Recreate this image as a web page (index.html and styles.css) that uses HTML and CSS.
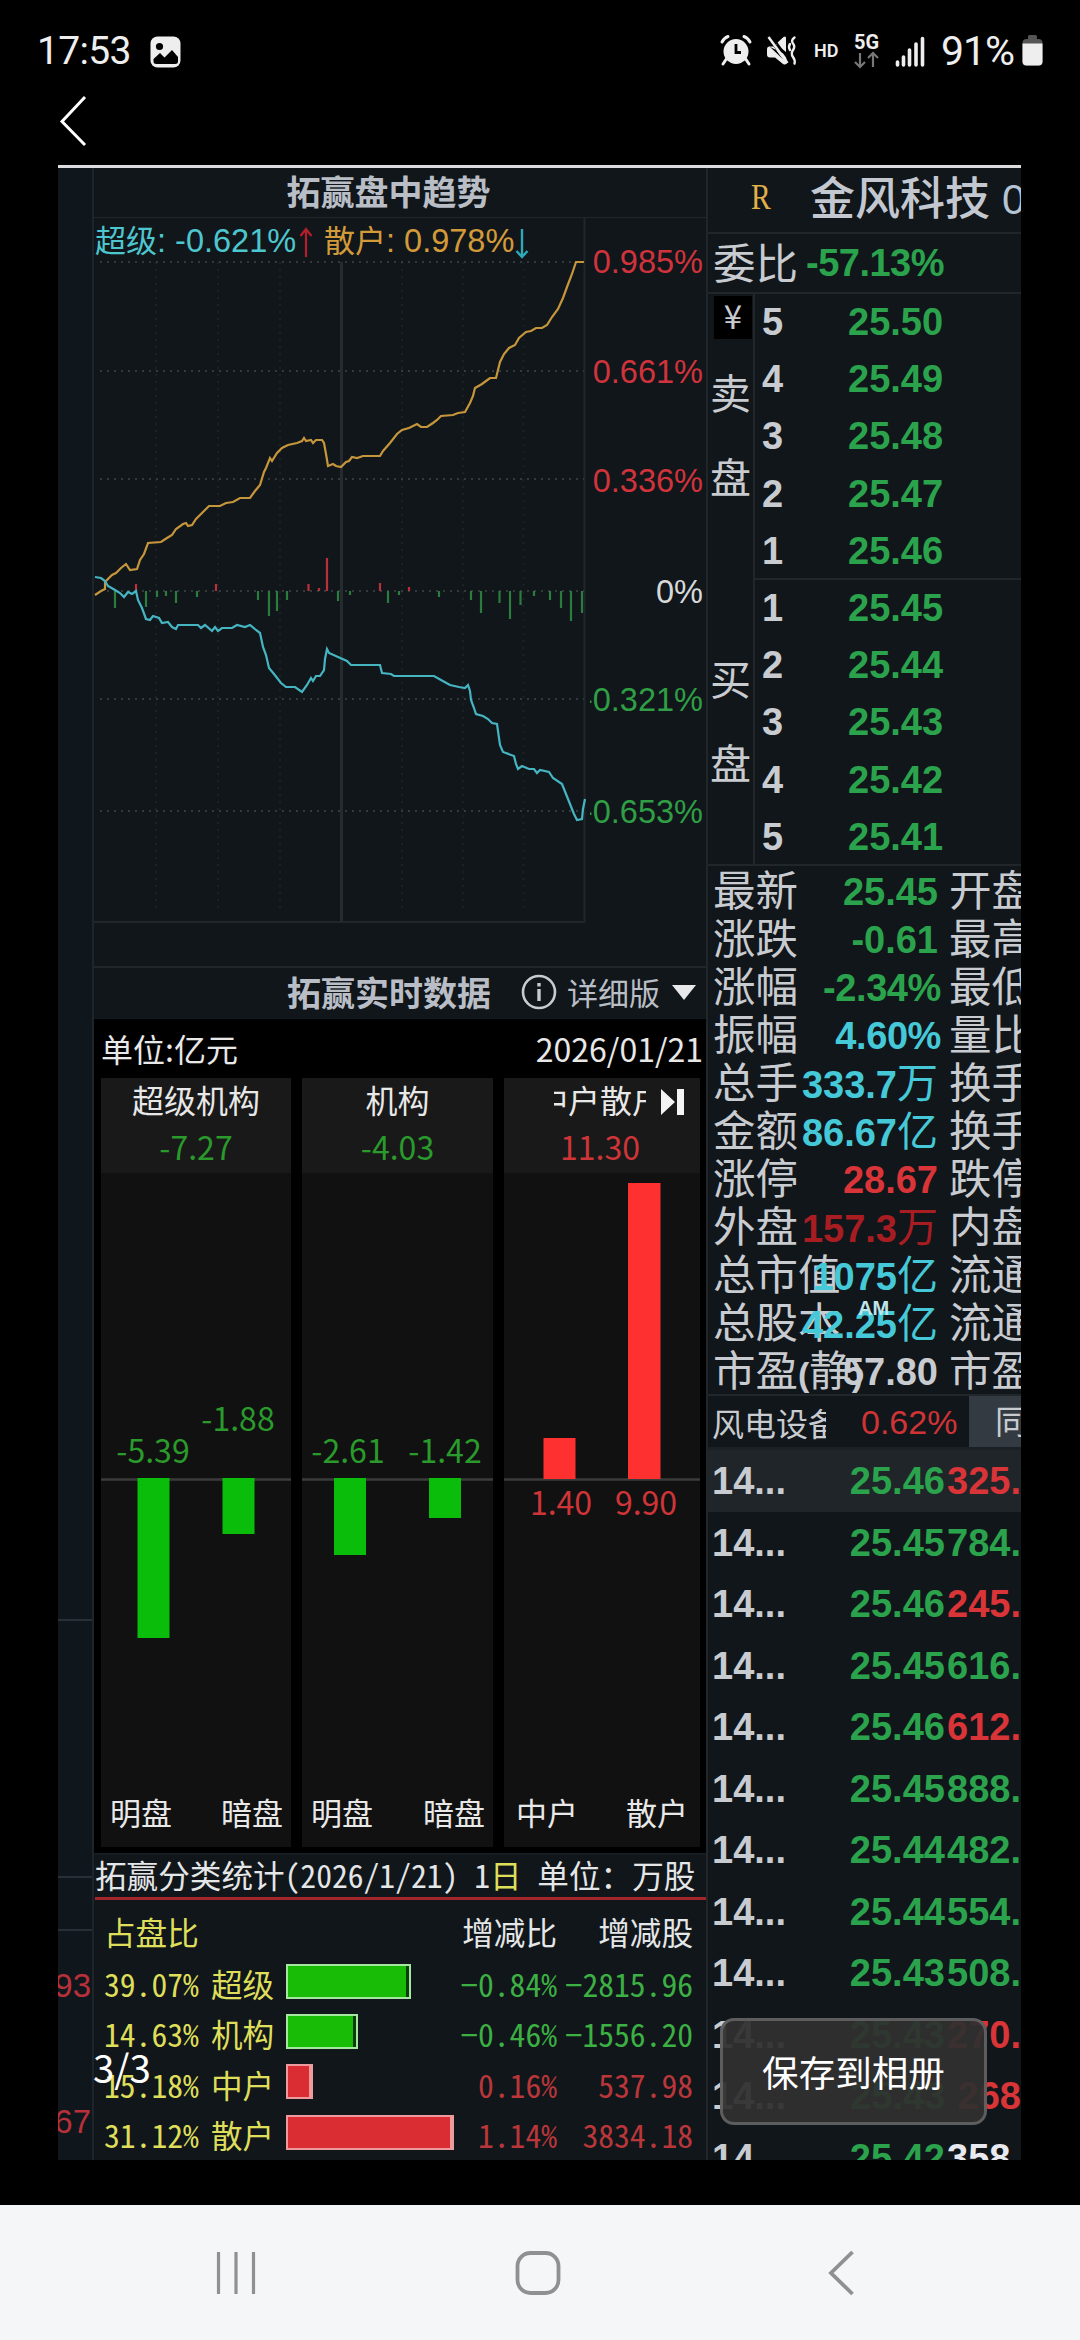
FILE: index.html
```html
<!DOCTYPE html>
<html lang="zh-CN">
<head>
<meta charset="utf-8">
<title>金风科技</title>
<link rel="stylesheet" href="styles.css">
</head>
<body>
<header class="status">
  <span class="clock">17:53</span>
  <svg class="ic-image" width="31" height="32" viewBox="0 0 31 32"><rect x="0.5" y="0.5" width="30" height="31" rx="7" fill="#eee"/><circle cx="9.5" cy="10.5" r="3.6" fill="#000"/><path d="M3.5 25.500V23l6.500-6 4.500 4.500L22 14l6 7v4.500q0 2.500-3 2.500H6.500q-3 0-3-2.500z" fill="#000"/></svg>
  <svg class="ic-sys" width="210" height="40" viewBox="718 32 210 40">
    <g fill="#eee">
      <circle cx="736" cy="52.500" r="12.500"/>
      <path d="M727 59l-4 6M745 59l4 6M722 43q2-4 6-5.500M750 43q-2-4-6-5.500" stroke="#eee" stroke-width="3" fill="none" stroke-linecap="round"/>
      <path d="M736 45v8.500h5" stroke="#000" stroke-width="2.800" fill="none"/>
      <path d="M769 47.500h4.500L786.500 65V56M776 45l7.500-7q2.500-1.500 2.500 1v14z"/>
      <path d="M769.500 47.500q-2.500 0-2.500 3v5q0 3 3 3h5l8 6.500q3.500 1.500 3.500-1.500z"/>
      <path d="M771 36l18 25" stroke="#000" stroke-width="2"/>
      <path d="M768.500 38l19 26" stroke="#eee" stroke-width="2.500"/>
      <path d="M794.500 38.500q-4 3-1.500 6t0 6.500 0 7 1.500 6.500M790 45q-2 3 0 6" stroke="#eee" stroke-width="2.400" fill="none" stroke-linecap="round"/>
      <text class="hd" x="814" y="58">HD</text>
      <text class="fiveg" x="854" y="50">5G</text>
      <path d="M860 54v14m-5-5l5 5 5-5M873 68V54m-5 5l5-5 5 5" stroke="#777" stroke-width="2.200" fill="none"/>
      <path d="M897.500 63v3M903.500 58v8M909.500 51v15M916 45v21M922.500 39.500v26.500" stroke="#eee" stroke-width="3.600" stroke-linecap="round"/>
    </g>
  </svg>
  <span class="batt-text">91%</span>
  <svg class="ic-batt" width="21" height="32" viewBox="0 0 21 32"><path d="M6 5V2.500Q6 1 7.500 1h6Q15 1 15 2.500V5h1.500q4 0 4 4v18.500q0 4-4 4h-12q-4 0-4-4V9q0-4 4-4z" fill="#555"/><path d="M.5 9.500h20v18q0 4-4 4h-12q-4 0-4-4z" fill="#eee"/></svg>
</header>
<div class="topbar">
  <svg width="30" height="54" viewBox="0 0 30 54"><path d="M27 3L4 27.500 27 51" fill="none" stroke="#fff" stroke-width="3"/></svg>
</div>

<main class="photo">
  <aside class="gutter">
    <i class="g1"></i><i class="g2"></i><i class="g3"></i>
    <span class="n93">93</span><span class="n67">67</span>
  </aside>

  <section class="mid">
    <h2 class="title">拓赢盘中趋势</h2>
    <svg class="trend" width="612" height="749" viewBox="94 217 612 749">
      <g stroke="#20262a" stroke-width="2" fill="none">
        <path d="M94 217H706M94 922H585M584.500 217V922"/>
        <path d="M341.500 262V922" stroke="#262b2f" stroke-width="3"/>
        <path stroke="#1b2125" stroke-dasharray="2 5" d="M156 262V910M218 262V910M280 262V910M402 262V910M463 262V910M523.500 262V910"/>
        <path stroke="#343a3c" stroke-dasharray="2 5" d="M100 262H584M100 371H584M100 479H584M100 591H584M100 699H584M100 811H584"/>
      </g>
      <path class="down" d="M115 591v17M146 591v16M157 591v6M166 591v5M176 591v12M197 591v6M258 591v9M269 591v25M277 591v20M287 591v9M338 591v10M350 591v4M388 591v12M399 591v4M439 591v6M471 591v9M481 591v22M499.500 591v12M510 591v28M520.500 591v14M534 591v5M550 591v9M561 591v17M571 591v30M582 591v22"/>
      <path class="up" d="M136 591v-7M216 591v-7M308.500 591v-7M319 591v-3M327 591V558M380 591v-8M409 591v-4"/>
      <polyline class="gold" points="95,595 101,591 105,589 105,582 112,575 116,573 121,568 126,564 130,570 137,569 140,560 144,554 148,543 161,542 167,538 172,535 176,529 183,524 186,523 188,526 192,525 196,519 200,515 205,510 209,506 220,506 226,503 233,502 240,498 250,498 255,491 260,485 264,472 266,468 270,458 272,461 277,453 282,448 288,445 297,443 302,441 304,438 306,441 311,440 313,443 316,440 322,440 324,443 326,454 328,466 333,464 336,466 341,467 346,462 349,461 352,457 357,458 363,456 380,456 383,451 390,443 397,434 402,430 409,428 417,424 421,427 427,427 433,423 437,420 441,416 453,415 458,413 465,412 470,403 473,396 475,388 482,384 486,381 490,378 496,378 500,362 504,354 509,348 515,345 519,338 526,332 531,331 536,328 542,328 547,325 552,317 558,309 563,298 567,287 572,274 576,262 584,262"/>
      <polyline class="cyan" points="95,577 101,578 105,581 108,586 115,590 120,593 124,597 128,592 132,594 136,591 138,600 142,608 146,619 150,620 153,616 159,618 162,623 168,622 172,627 176,629 178,625 198,625 201,628 205,625 212,631 215,627 218,631 222,628 232,628 237,625 245,627 250,625 256,630 260,633 263,647 266,655 269,668 274,674 281,683 286,687 295,687 302,692 307,685 311,678 313,681 316,676 320,676 324,670 325,659 327,649 329,653 338,657 347,661 351,665 380,665 382,673 391,674 394,676 434,676 441,680 450,685 459,687 465,688 468,685 470,691 471,700 474,708 476,714 483,716 488,719 492,723 497,724 500,745 503,752 514,756 516,764 518,769 522,766 529,769 534,769 537,773 540,770 549,772 553,778 562,784 566,794 570,804 574,814 577,820 582,819 583,809 585,799"/>
      <g class="lg">
        <text x="95" y="252" fill="#4ec6cf"><tspan class="cj">超级</tspan>: -0.621%</text>
        <text x="324" y="252" fill="#d39a3a"><tspan class="cj">散户</tspan>: 0.978%</text>
        <path d="M306 257V229m-5.500 7l5.500-7 5.500 7" stroke="#b3202c" stroke-width="2.200" fill="none"/>
        <path d="M522 229v28m-5.500-6l5.500 6 5.500-6" stroke="#2fa8b8" stroke-width="2.400" fill="none"/>
      </g>
      <clipPath id="axisArea"><rect x="590" y="217" width="116" height="705"/></clipPath>
      <g class="axis" text-anchor="end" clip-path="url(#axisArea)">
        <text x="703" y="273" fill="#d0333c">0.985%</text>
        <text x="703" y="383" fill="#d0333c">0.661%</text>
        <text x="703" y="492" fill="#d0333c">0.336%</text>
        <text x="703" y="603" fill="#d6d8da">0%</text>
        <text x="703" y="711" fill="#2f9e45">-0.321%</text>
        <text x="703" y="823" fill="#2f9e45">-0.653%</text>
      </g>
    </svg>

    <div class="title title2">
      <h2>拓赢实时数据</h2>
      <div class="detail">
        <svg width="36" height="36" viewBox="0 0 36 36" fill="none" stroke="#c8cbd0" stroke-width="2.600"><circle cx="18" cy="18" r="16"/><path d="M18 15v12M18 9v3.500" stroke-width="3.400"/></svg>
        <span>详细版</span>
        <svg width="24" height="15" viewBox="0 0 24 15"><path d="M0 0h24L12 15z" fill="#e8e8ea"/></svg>
      </div>
    </div>

    <div class="flows">
      <div class="unit"><span>单位:亿元</span><span>2026/01/21</span></div>
      <div class="cards">
        <article>
          <div class="head"><b>超级机构</b><em class="g">-7.27</em></div>
          <svg class="plot" width="190" height="610" viewBox="101 1173 190 610">
            <path d="M101 1479.500H291" class="zero"/>
            <path fill="#0bbd0b" d="M137.500 1478h32v160h-32zM222.500 1478h32v56h-32z"/>
            <text x="153" y="1463" class="g">-5.39</text><text x="238" y="1431" class="g">-1.88</text>
          </svg>
          <div class="foot"><span>明盘</span><span>暗盘</span></div>
        </article>
        <article>
          <div class="head"><b>机构</b><em class="g">-4.03</em></div>
          <svg class="plot" width="191" height="610" viewBox="302 1173 191 610">
            <path d="M302 1479.500H493" class="zero"/>
            <path fill="#0bbd0b" d="M334 1478h32v77h-32zM429 1478h32v40h-32z"/>
            <text x="348" y="1463" class="g">-2.61</text><text x="445" y="1463" class="g">-1.42</text>
          </svg>
          <div class="foot"><span>明盘</span><span>暗盘</span></div>
        </article>
        <article>
          <div class="head"><b class="slide"><span>中户散户</span></b><em class="r">11.30</em>
            <svg class="next" width="25" height="26" viewBox="0 0 25 26" fill="#f4f4f4"><path d="M0 0l14 13L0 26zM16 0h7v26h-7z"/></svg></div>
          <svg class="plot" width="196" height="610" viewBox="504 1173 196 610">
            <path d="M504 1479.500H700" class="zero"/>
            <path fill="#ff3030" d="M543.500 1438h32v41h-32zM628 1183h32.500v296h-32.500z"/>
            <text x="561" y="1515" class="r">1.40</text><text x="646" y="1515" class="r">9.90</text>
          </svg>
          <div class="foot"><span>中户</span><span>散户</span></div>
        </article>
      </div>
    </div>

    <div class="stats">
      <div class="caption">拓赢分类统计(2026/1/21) 1<span class="y">日</span> 单位：万股</div>
      <div class="row hd2"><span class="y w1">占盘比</span><span class="ratio">增减比</span><span class="share">增减股</span></div>
      <div class="row"><span class="y pct">39.07%</span><span class="y nm">超级</span><i class="bar gb" style="width:125px"></i><span class="ratio dn">−0.84%</span><span class="share dn">−2815.96</span></div>
      <div class="row"><span class="y pct">14.63%</span><span class="y nm">机构</span><i class="bar gb" style="width:72px"></i><span class="ratio dn">−0.46%</span><span class="share dn">−1556.20</span></div>
      <div class="row"><span class="y pct">15.18%</span><span class="y nm">中户</span><i class="bar rb" style="width:27px"></i><span class="ratio upx">0.16%</span><span class="share upx">537.98</span></div>
      <div class="row"><span class="y pct">31.12%</span><span class="y nm">散户</span><i class="bar rb" style="width:168px"></i><span class="ratio upx">1.14%</span><span class="share upx">3834.18</span></div>
    </div>
  </section>

  <section class="quote">
    <div class="name"><span class="tag">R</span><h1>金风科技</h1><span class="code">0</span></div>
    <div class="wb"><span class="cn">委比</span><span class="num green">-57.13%</span></div>
    <div class="book">
      <div class="sides">
        <span class="yen">¥</span>
        <div class="side s1"><span>卖</span><span>盘</span></div>
        <div class="side s2"><span>买</span><span>盘</span></div>
      </div>
      <div class="levels">
        <div class="half">
          <p><b>5</b><span>25.50</span></p><p><b>4</b><span>25.49</span></p><p><b>3</b><span>25.48</span></p><p><b>2</b><span>25.47</span></p><p><b>1</b><span>25.46</span></p>
        </div>
        <div class="half">
          <p><b>1</b><span>25.45</span></p><p><b>2</b><span>25.44</span></p><p><b>3</b><span>25.43</span></p><p><b>4</b><span>25.42</span></p><p><b>5</b><span>25.41</span></p>
        </div>
      </div>
    </div>
    <div class="info">
      <p><span class="cn">最新</span><b class="green">25.45</b><span class="cn">开盘</span></p>
      <p><span class="cn">涨跌</span><b class="green">-0.61</b><span class="cn">最高</span></p>
      <p><span class="cn">涨幅</span><b class="green pc">-2.34%</b><span class="cn">最低</span></p>
      <p><span class="cn">振幅</span><b class="aqua pc">4.60%</b><span class="cn">量比</span></p>
      <p><span class="cn">总手</span><b class="aqua">333.7<u>万</u></b><span class="cn">换手</span></p>
      <p><span class="cn">金额</span><b class="aqua">86.67<u>亿</u></b><span class="cn">换手</span></p>
      <p><span class="cn">涨停</span><b class="red">28.67</b><span class="cn">跌停</span></p>
      <p><span class="cn">外盘</span><b class="dred">157.3<u>万</u></b><span class="cn">内盘</span></p>
      <p><span class="cn">总市值</span><b class="aqua">1075<u>亿</u></b><span class="cn">流通</span></p>
      <p><span class="cn">总股本</span><b class="aqua">42.25<u>亿</u></b><span class="cn">流通</span><small>AM</small></p>
      <p><span class="cn">市盈<s>(</s>静<s>)</s></span><b>57.80</b><span class="cn">市盈</span></p>
    </div>
    <div class="sector"><span class="sname">风电设备</span><span class="spct">0.62%</span><span class="same">同</span></div>
    <div class="ticks">
      <p class="on"><b>14...</b><span>25.46</span><em class="red">325.</em></p>
      <p><b>14...</b><span>25.45</span><em>784.</em></p>
      <p><b>14...</b><span>25.46</span><em class="red">245.</em></p>
      <p><b>14...</b><span>25.45</span><em>616.</em></p>
      <p><b>14...</b><span>25.46</span><em class="red">612.</em></p>
      <p><b>14...</b><span>25.45</span><em>888.</em></p>
      <p><b>14...</b><span>25.44</span><em>482.</em></p>
      <p><b>14...</b><span>25.44</span><em>554.</em></p>
      <p><b>14...</b><span>25.43</span><em>508.</em></p>
      <p><b>14...</b><span>25.43</span><em class="red">270.</em></p>
      <p><b>14...</b><span>25.43</span><em class="red short">268</em></p>
      <p><b>14...</b><span>25.42</span><em class="wh">358.</em></p>
    </div>
  </section>
</main>

<span class="counter">3/3</span>
<button class="save">保存到相册</button>

<nav class="nav">
  <svg width="1080" height="135" viewBox="0 2205 1080 135" fill="none" stroke="#909092">
    <path d="M218.500 2252v42M236 2252v42M253.500 2252v42" stroke-width="3.200"/>
    <rect x="517.500" y="2253" width="41" height="40" rx="13" stroke-width="3.800"/>
    <path d="M852.500 2252L831 2273l21.500 21" stroke-width="3.800"/>
  </svg>
</nav>
</body>
</html>
```
FILE: styles.css
```css
* { box-sizing: border-box; margin: 0; padding: 0; }
body {
  width: 1080px; height: 2340px; overflow: hidden; position: relative;
  background: #000; color: #c8cbd0;
  font-family: "Noto Sans CJK SC", sans-serif;
  display: flex; flex-direction: column;
}
em, i { font-style: normal; }
h1, h2 { font-weight: inherit; font-size: inherit; }
svg { display: block; flex: none; }
p, span, h1, h2 { white-space: nowrap; }

/* status bar */
.status { height: 86px; flex: none; padding: 16px 37px 0; display: flex; align-items: center; color: #eee; }
.clock, .batt-text { font: 400 39px/70px Roboto, sans-serif; letter-spacing: -0.7px; }
.clock { width: 113px; }
.ic-image { margin-top: 2px; }
.ic-sys { margin-left: 537px; }
.hd { font: 600 18px Roboto, sans-serif; }
.fiveg { font: 700 20px Roboto, sans-serif; }
.batt-text { width: 94px; text-align: right; padding-right: 8px; font-size: 41px; letter-spacing: -1px; }
.ic-batt { margin-top: -2px; }
.topbar { height: 79px; flex: none; padding: 8px 0 0 58px; }

/* terminal photo */
.photo {
  width: 963px; height: 1995px; margin-left: 58px; flex: none; overflow: hidden;
  border-top: 3px solid #dcdcde; background: #11161a;
  display: grid; grid-template-columns: 36px 612px 315px;
}
.gutter { position: relative; overflow: hidden; background: #0f171c; border-right: 2px solid #1f262b; }
.gutter i { position: absolute; left: 0; right: 0; height: 2px; background: #273036; }
.g1 { top: 1451px; } .g2 { top: 1708px; } .g3 { top: 1761px; }
.gutter span { position: absolute; right: 1px; font: 33px/40px "Liberation Sans", sans-serif; color: #b8303a; }
.n93 { top: 1798px; } .n67 { top: 1934px; }

.mid { display: flex; flex-direction: column; min-width: 0; }
.title { height: 49px; text-align: center; padding-right: 23px; font-weight: 700; font-size: 34px; line-height: 46px; color: #b9bec6; flex: none; }
.title2 { height: 53px; border-top: 2px solid #20262a; padding: 0 10px 0 193px; display: flex; justify-content: space-between; line-height: 48px; }
.detail { display: flex; align-items: center; font-size: 31px; font-weight: 400; gap: 12px; }
.detail span { margin-left: -2px; position: relative; top: -2px; }
.detail svg { margin-top: -3px; }
.trend { overflow: hidden; }
.down { stroke: #2a7d3c; stroke-width: 2.2; }
.up { stroke: #b8303a; stroke-width: 2.2; }
.gold, .cyan { fill: none; stroke-width: 2.2; }
.gold { stroke: #c6963c; }
.cyan { stroke: #45b5c2; }
.lg { font: 32.500px "Liberation Sans", sans-serif; }
.cj { font: 31px "Noto Sans CJK SC", sans-serif; }
.axis { font: 32.500px "Liberation Sans", sans-serif; }

.flows { background: #000; height: 834px; flex: none; padding: 0 6px 0 7px; color: #e8e8e8; }
.unit { height: 59px; display: flex; justify-content: space-between; font-size: 32px; line-height: 58px; margin-right: -3px; }
.cards { display: grid; grid-template-columns: 190px 191px 196px; justify-content: space-between; }
.cards article { background: #111; height: 769px; }
.head { height: 95px; background: #191919; position: relative; display: flex; flex-direction: column; align-items: center; font-size: 32px; }
.head b { font-weight: 400; line-height: 43px; height: 47px; }
.head em { line-height: 43px; }
.slide { width: 92px; overflow: hidden; display: flex; justify-content: center; margin-right: 4px; }
.next { position: absolute; right: 14px; top: 11px; }
.head em.r { margin-right: 4px; }
.g { color: #2a9a2c; fill: #2a9a2c; }
.r { color: #cf3538; fill: #cf3538; }
.plot text { font-size: 32px; text-anchor: middle; }
.zero { stroke: #3b3b3b; stroke-width: 2.500; }
.foot { display: flex; justify-content: space-between; padding: 0 8px 0 9px; font-size: 31px; line-height: 58px; }
article:last-child .foot { padding: 0 12px; }

/* half-width latin keeps the table columns on a grid */
.stats { flex: 1; font-size: 31.600px; font-feature-settings: "hwid"; color: #e4e6e8; padding-left: 1px; border-top: 2px solid #171c20; }
.caption { height: 45px; line-height: 39px; border-bottom: 3px solid #a3262c; white-space: pre; }
.row { height: 50.300px; display: flex; align-items: center; padding: 0 13px 0 9px; line-height: 46px; }
.row span { position: relative; top: -2px; }
.row.hd2 { height: 60px; }
.row.hd2 span { top: 1px; }
.hd2 .ratio { margin-left: auto; }
.y { color: #dede5a; }
.pct { width: 107px; }
.nm { width: 75px; }
.bar { height: 35px; border: 2px solid #c9e6c9; position: relative; top: -4px; }
.gb { background: #18bb06; border-color: #a5e6a0; border-right-width: 2px; box-shadow: inset -3px 0 #0c3d0c; }
.rb { background: #da2d33; border-color: #ee9a9c; border-right-width: 4px; }
.ratio { margin-left: auto; }
.share { width: 136px; text-align: right; }
.dn { color: #3cb043; }
.upx { color: #b9363b; }

/* quote column */
.quote { border-left: 2px solid #20262a; overflow: hidden; display: flex; flex-direction: column; }
.quote > * { flex: none; }
.cn { font-size: 42.500px; }
.green { color: #2ba34d; }
.red { color: #d93438; }
.dred { color: #a81d22; }
.aqua { color: #45c9d8; }
.name { height: 66px; display: flex; align-items: center; border-bottom: 2px solid #20262a; padding-left: 41px; }
.tag { font: 36px/50px "Liberation Serif", serif; color: #e0b04c; width: 61px; flex: none; transform: scaleX(.82); transform-origin: 0 50%; position: relative; top: -3px; left: 2px; }
.name h1 { flex: none; font-size: 45px; line-height: 60px; font-weight: 500; color: #c3c8d0; position: relative; top: -4px; }
.code { font: 42px/60px "Liberation Sans", sans-serif; padding-left: 12px; color: #b4c4d4; }
.wb { height: 60px; display: flex; align-items: center; line-height: 58px; padding-left: 5px; border-bottom: 2px solid #20262a; }
.wb .cn { width: 93px; position: relative; top: -2px; }
.num, .levels, .info b, .ticks { font-family: "Liberation Sans", "Noto Sans CJK SC", sans-serif; font-weight: 700; font-size: 38px; }
.wb .num { letter-spacing: -.5px; }
.book { height: 572px; display: grid; grid-template-columns: 47px 1fr; border-bottom: 2px solid #20262a; }
.sides { border-right: 2px solid #20262a; display: flex; flex-direction: column; padding-left: 2px; font-size: 41px; }
.yen { width: 38px; height: 43px; margin: 2px 0 0 4px; background: #000; text-align: center; font-size: 33px; line-height: 38px; }
.side { display: flex; flex-direction: column; gap: 24px; line-height: 60px; }
.s1 { margin-top: 22px; }
.s2 { margin-top: 142px; }
.half { height: 286px; }
.half:first-child { border-bottom: 2px solid #20262a; }
.half p { height: 57.200px; line-height: 57px; display: flex; padding-left: 7px; }
.half b { width: 86px; }
.half span { color: #2ba34d; }
.info { height: 528px; }
.info p { height: 48px; line-height: 48px; display: grid; grid-template-columns: 225px 90px; position: relative; padding-left: 5px; }
.info .cn, .info b { grid-row: 1; min-width: 0; position: relative; }
.info .cn { top: -2px; grid-column: 1; }
.info b { grid-column: 1; justify-self: end; top: 2px; }
.info .pc { left: 3px; letter-spacing: -.4px; }
.info b + .cn { grid-column: 2; padding-left: 11px; }
.info u { text-decoration: none; font: 400 41px/40px "Noto Sans CJK SC", sans-serif; }
.info s { text-decoration: none; font: 700 34px/40px "Liberation Sans", sans-serif; }
.info small { position: absolute; left: 150px; top: -10px; font: 700 20px/40px "Liberation Sans", sans-serif; color: #bfe6ec; }
.sector { height: 56px; display: flex; align-items: center; border-top: 2px solid #20262a; border-bottom: 3px solid #1a2025; padding-left: 4px; }
.sname { width: 114px; overflow: hidden; font-size: 32px; line-height: 50px; }
.spct { width: 143px; padding-left: 35px; font: 34px/50px "Liberation Sans", sans-serif; color: #d03336; }
.same { flex: 1; overflow: hidden; height: 51px; background: #343a42; padding-left: 26px; font-size: 33px; line-height: 48px; }
.ticks p { height: 61.500px; line-height: 62px; display: flex; padding-left: 4px; color: #2ba34d; }
.ticks .on { background: #1f2529; }
.ticks b { width: 139px; color: #c8cbd0; }
.ticks span { width: 98px; }
.ticks .red { color: #d93438; }
.ticks .wh { color: #e8eaf0; }
.ticks .short { padding-left: 10px; }

/* viewer controls lying over the photo */
.counter { position: absolute; left: 93px; top: 2038px; font-size: 38.500px; line-height: 56px; color: #fff; }
.save {
  position: absolute; left: 720px; top: 2018px; width: 267px; height: 107px;
  border: 3px solid rgba(110,110,110,.75); border-radius: 14px; background: rgba(48,48,48,.94);
  color: #fff; font: 36.600px/100px "Noto Sans CJK SC", sans-serif;
}
.nav { margin-top: auto; height: 135px; background: #f5f6f8; flex: none; }
```
